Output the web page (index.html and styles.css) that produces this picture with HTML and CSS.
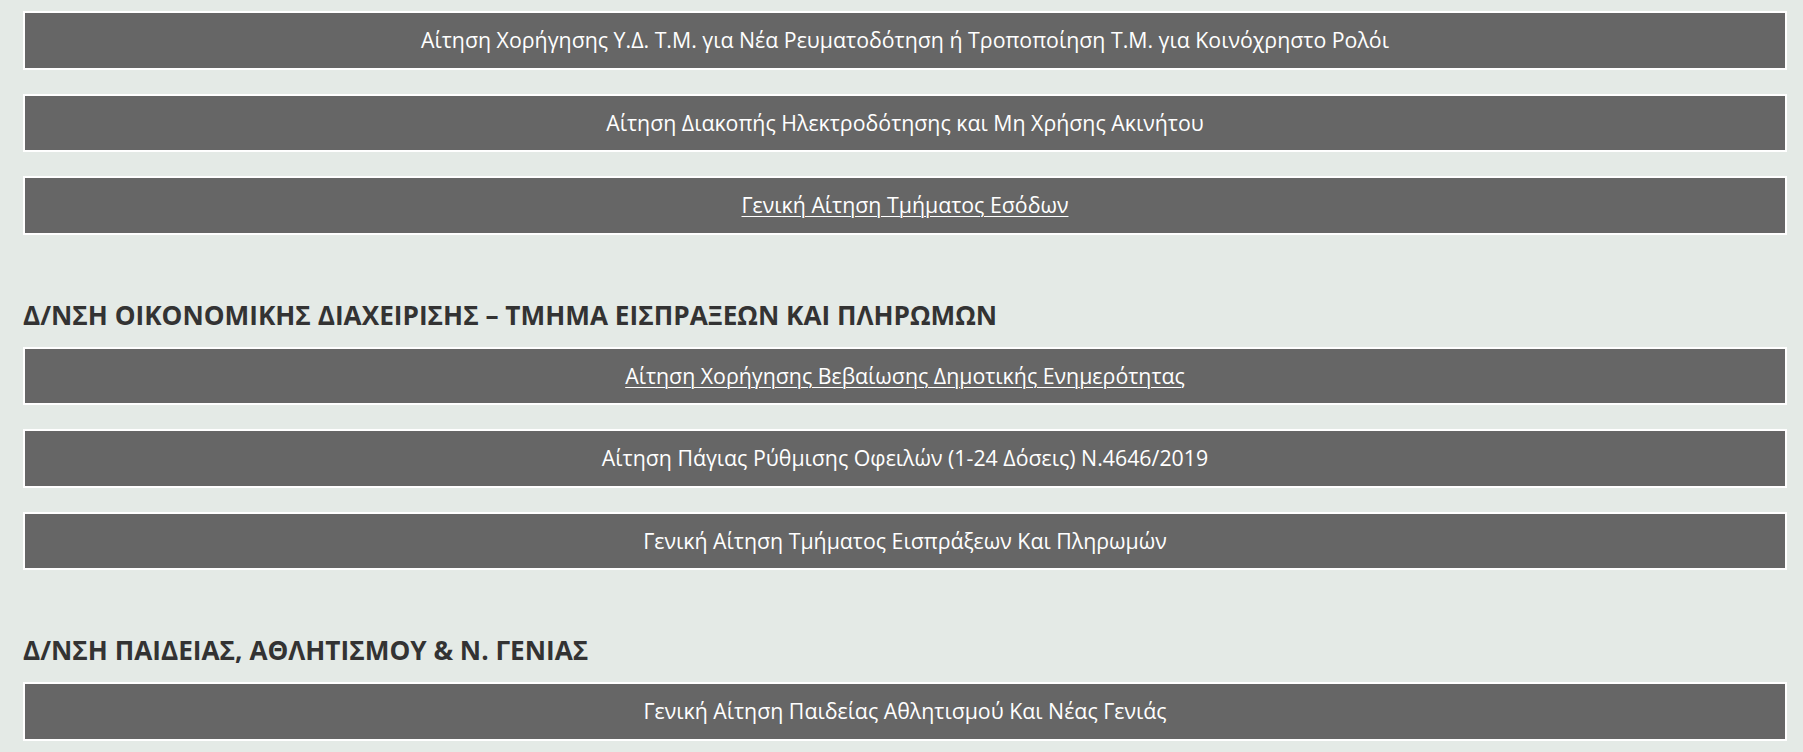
FILE: index.html
```html
<!DOCTYPE html>
<html lang="el">
<head>
<meta charset="utf-8">
<title>Αιτήσεις</title>
<link rel="stylesheet" href="styles.css">
</head>
<body>
<main class="page">
  <section class="group">
    <a class="btn">Αίτηση Χορήγησης Υ.Δ. Τ.Μ. για Νέα Ρευματοδότηση ή Τροποποίηση Τ.Μ. για Κοινόχρηστο Ρολόι</a>
    <a class="btn">Αίτηση Διακοπής Ηλεκτροδότησης και Μη Χρήσης Ακινήτου</a>
    <a class="btn"><span class="u">Γενική Αίτηση Τμήματος Εσόδων</span></a>
  </section>
  <section class="group">
    <h2 class="title">Δ/ΝΣΗ ΟΙΚΟΝΟΜΙΚΗΣ ΔΙΑΧΕΙΡΙΣΗΣ – ΤΜΗΜΑ ΕΙΣΠΡΑΞΕΩΝ ΚΑΙ ΠΛΗΡΩΜΩΝ</h2>
    <a class="btn"><span class="u">Αίτηση Χορήγησης Βεβαίωσης Δημοτικής Ενημερότητας</span></a>
    <a class="btn">Αίτηση Πάγιας Ρύθμισης Οφειλών (1-24 Δόσεις) Ν.4646/2019</a>
    <a class="btn">Γενική Αίτηση Τμήματος Εισπράξεων Και Πληρωμών</a>
  </section>
  <section class="group">
    <h2 class="title">Δ/ΝΣΗ ΠΑΙΔΕΙΑΣ, ΑΘΛΗΤΙΣΜΟΥ &amp; Ν. ΓΕΝΙΑΣ</h2>
    <a class="btn">Γενική Αίτηση Παιδείας Αθλητισμού Και Νέας Γενιάς</a>
  </section>
</main>
</body>
</html>
```
FILE: styles.css
```css
html, body {
  margin: 0;
  padding: 0;
  background: #e4eae6;
}
body {
  font-family: "Open Sans", "Noto Sans", sans-serif;
}
.page {
  padding: 11px 16px 0 23px;
}
.group {
  display: flex;
  flex-direction: column;
}
.group + .group {
  margin-top: 30.5px;
}
.btn {
  display: block;
  box-sizing: border-box;
  height: 58.5px;
  margin-bottom: 24px;
  border: 2px solid #ffffff;
  background: #666666;
  color: #ffffff;
  font-size: 21.33px;
  line-height: 54.5px;
  text-align: center;
  text-decoration: none;
}
.u {
  text-decoration: underline;
  text-underline-offset: 3px;
  text-decoration-thickness: 1px;
}
.title {
  margin: 0 0 9px 0;
  padding-top: 3.5px;
  font-size: 26.2px;
  font-weight: 700;
  color: #333333;
  line-height: 45px;
}
```
